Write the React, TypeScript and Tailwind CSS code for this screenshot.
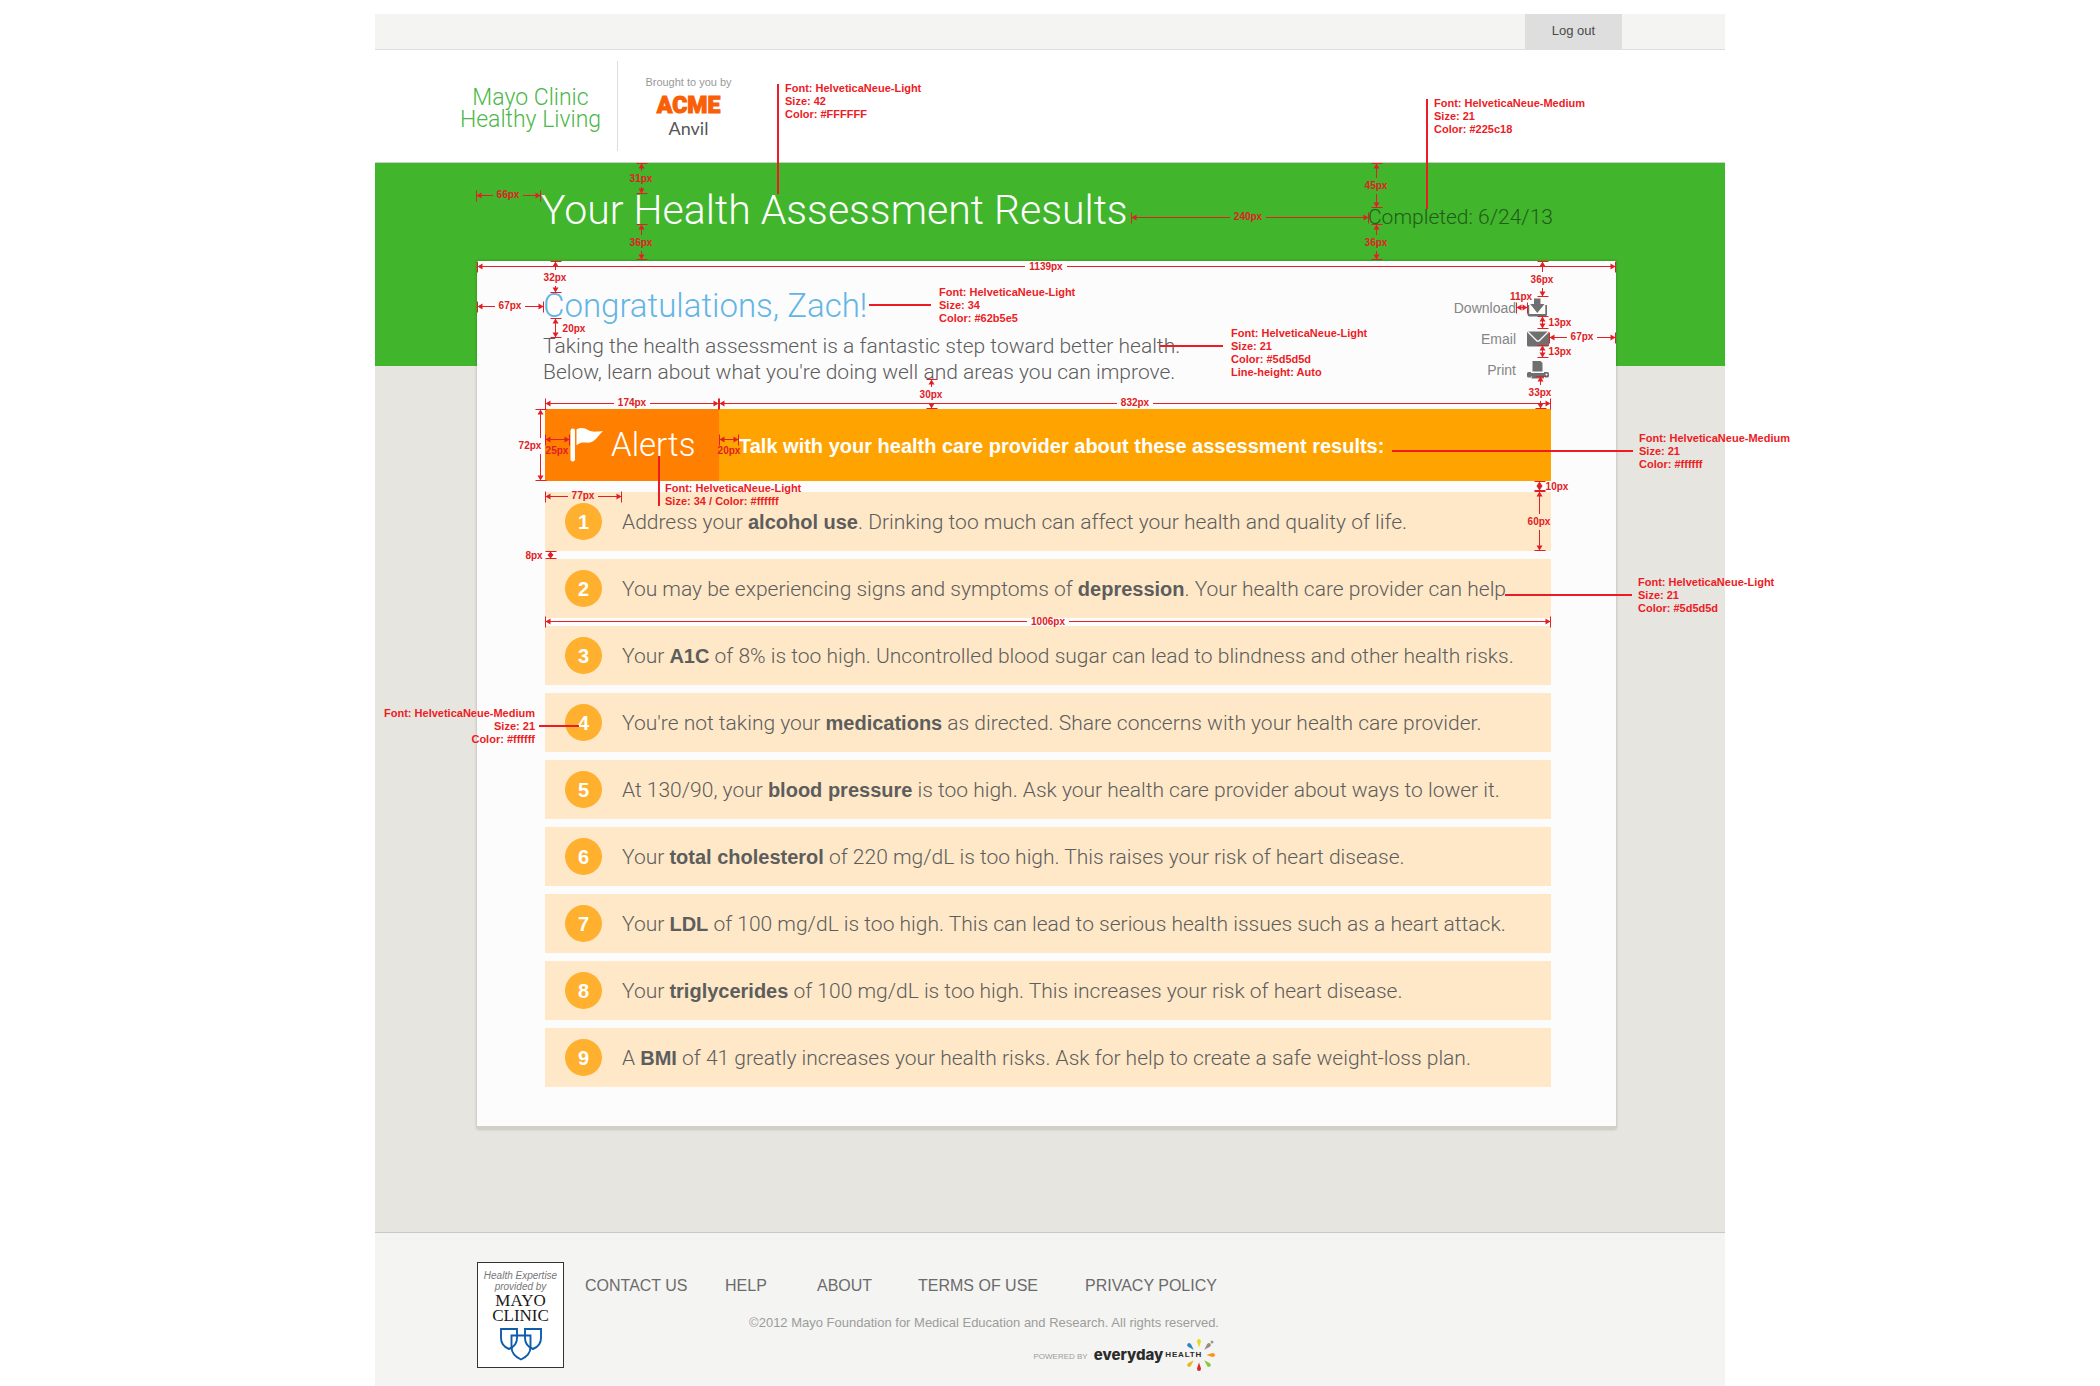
import React from "react";

const alerts: [string, string, string][] = [
  ["Address your ", "alcohol use", ". Drinking too much can affect your health and quality of life."],
  ["You may be experiencing signs and symptoms of ", "depression", ". Your health care provider can help."],
  ["Your ", "A1C", " of 8% is too high. Uncontrolled blood sugar can lead to blindness and other health risks."],
  ["You're not taking your ", "medications", " as directed. Share concerns with your health care provider."],
  ["At 130/90, your ", "blood pressure", " is too high. Ask your health care provider about ways to lower it."],
  ["Your ", "total cholesterol", " of 220 mg/dL is too high. This raises your risk of heart disease."],
  ["Your ", "LDL", " of 100 mg/dL is too high. This can lead to serious health issues such as a heart attack."],
  ["Your ", "triglycerides", " of 100 mg/dL is too high. This increases your risk of heart disease."],
  ["A ", "BMI", " of 41 greatly increases your health risks. Ask for help to create a safe weight-loss plan."],
];

/* Design annotations. Coordinates are measured from the top left corner of the page column. */

type Measure = {
  dir: "h" | "v";
  at: number;
  from: number;
  to: number;
  label: string;
  x: number;
  y: number;
  gap?: boolean;
};

const measures: Measure[] = [
  { dir: "v", at: 266, from: 163, to: 193, label: "31px", x: 266, y: 179, gap: true },
  { dir: "v", at: 266, from: 224, to: 259, label: "36px", x: 266, y: 243, gap: true },
  { dir: "h", at: 195, from: 101, to: 165, label: "66px", x: 133, y: 195, gap: true },
  { dir: "h", at: 266, from: 102, to: 1240, label: "1139px", x: 671, y: 267, gap: true },
  { dir: "v", at: 1001, from: 163, to: 207, label: "45px", x: 1001, y: 186, gap: true },
  { dir: "v", at: 1001, from: 224, to: 259, label: "36px", x: 1001, y: 243, gap: true },
  { dir: "h", at: 217, from: 756, to: 993, label: "240px", x: 873, y: 217, gap: true },
  { dir: "v", at: 180, from: 261, to: 292, label: "32px", x: 180, y: 278, gap: true },
  { dir: "v", at: 180, from: 318, to: 337, label: "20px", x: 199, y: 329 },
  { dir: "h", at: 306, from: 102, to: 168, label: "67px", x: 135, y: 306, gap: true },
  { dir: "h", at: 403, from: 170, to: 343, label: "174px", x: 257, y: 403, gap: true },
  { dir: "h", at: 403, from: 344, to: 1175, label: "832px", x: 760, y: 403, gap: true },
  { dir: "v", at: 556, from: 379, to: 408, label: "30px", x: 556, y: 395, gap: true },
  { dir: "v", at: 165, from: 409, to: 480, label: "72px", x: 155, y: 446, gap: true },
  { dir: "h", at: 439, from: 170, to: 194, label: "25px", x: 182, y: 451 },
  { dir: "h", at: 439, from: 344, to: 363, label: "20px", x: 354, y: 451 },
  { dir: "h", at: 496, from: 170, to: 246, label: "77px", x: 208, y: 496, gap: true },
  { dir: "v", at: 1167, from: 261, to: 296, label: "36px", x: 1167, y: 280, gap: true },
  { dir: "h", at: 307, from: 1141, to: 1152, label: "11px", x: 1146, y: 297 },
  { dir: "v", at: 1167, from: 316, to: 328, label: "13px", x: 1185, y: 323 },
  { dir: "v", at: 1167, from: 345, to: 357, label: "13px", x: 1185, y: 352 },
  { dir: "h", at: 337, from: 1174, to: 1240, label: "67px", x: 1207, y: 337, gap: true },
  { dir: "v", at: 1165, from: 376, to: 408, label: "33px", x: 1165, y: 393, gap: true },
  { dir: "v", at: 1164, from: 481, to: 490, label: "10px", x: 1182, y: 487 },
  { dir: "v", at: 1164, from: 491, to: 550, label: "60px", x: 1164, y: 522, gap: true },
  { dir: "v", at: 175, from: 551, to: 558, label: "8px", x: 159, y: 556 },
  { dir: "h", at: 621, from: 170, to: 1175, label: "1006px", x: 673, y: 622, gap: true },
];

const leaders: [number, number, number, number][] = [
  [403, 84, 403, 194],
  [1052, 99, 1052, 209],
  [494, 305, 556, 305],
  [785, 346, 848, 346],
  [1017, 451, 1258, 451],
  [284, 456, 284, 506],
  [1130, 595, 1257, 595],
  [164, 726, 204, 726],
];

const notes: { x: number; y: number; right?: boolean; lines: string[] }[] = [
  { x: 410, y: 82, lines: ["Font: HelveticaNeue-Light", "Size: 42", "Color: #FFFFFF"] },
  { x: 1059, y: 97, lines: ["Font: HelveticaNeue-Medium", "Size: 21", "Color: #225c18"] },
  { x: 564, y: 286, lines: ["Font: HelveticaNeue-Light", "Size: 34", "Color: #62b5e5"] },
  { x: 856, y: 327, lines: ["Font: HelveticaNeue-Light", "Size: 21", "Color: #5d5d5d", "Line-height: Auto"] },
  { x: 1264, y: 432, lines: ["Font: HelveticaNeue-Medium", "Size: 21", "Color: #ffffff"] },
  { x: 290, y: 482, lines: ["Font: HelveticaNeue-Light", "Size: 34 / Color: #ffffff"] },
  { x: 1263, y: 576, lines: ["Font: HelveticaNeue-Light", "Size: 21", "Color: #5d5d5d"] },
  { x: 160, y: 707, right: true, lines: ["Font: HelveticaNeue-Medium", "Size: 21", "Color: #ffffff"] },
];

function MeasureLine({ m }: { m: Measure }) {
  const along = m.dir === "h" ? m.x : m.y;
  const half = m.dir === "h" ? m.label.length * 3 + 3 : 8;
  const a = m.from + 0.5;
  const b = m.to + 0.5;
  const c = m.at + 0.5;
  const head = Math.min(5, (b - a) / 2);
  const d =
    `M${a} ${c - 5}V${c + 6}M${b} ${c - 5}V${c + 6}` +
    (m.gap ? `M${a} ${c}H${along - half}M${along + half} ${c}H${b}` : `M${a} ${c}H${b}`);
  const shape = (
    <>
      <path d={d} stroke="#e02025" fill="none" />
      <path d={`M${a} ${c}l${head} -3v6zM${b} ${c}l${-head} -3v6z`} fill="#e02025" />
    </>
  );
  return m.dir === "h" ? <g>{shape}</g> : <g transform="matrix(0 1 1 0 0 0)">{shape}</g>;
}

function Annotations() {
  return (
    <div className="pointer-events-none absolute inset-0 font-['Liberation_Sans',Arial,sans-serif] font-bold text-[#ed1c24]">
      <svg className="absolute left-0 top-0 overflow-visible" width="1350" height="800" aria-hidden="true">
        {measures.map((m, i) => (
          <MeasureLine key={i} m={m} />
        ))}
        {leaders.map(([x1, y1, x2, y2], i) => (
          <path key={i} d={`M${x1} ${y1}L${x2} ${y2}`} stroke="#ed1c24" strokeWidth="2" />
        ))}
      </svg>
      {measures.map((m, i) => (
        <span
          key={i}
          className="absolute -translate-x-1/2 -translate-y-1/2 text-[10px] leading-3 text-[#e02025]"
          style={{ left: m.x, top: m.y }}
        >
          {m.label}
        </span>
      ))}
      {notes.map((n, i) => (
        <div
          key={i}
          className={
            n.right
              ? "absolute -translate-x-full whitespace-nowrap text-right text-[11px] leading-[13px]"
              : "absolute whitespace-nowrap text-[11px] leading-[13px]"
          }
          style={{ left: n.x, top: n.y }}
        >
          {n.lines.map((l) => (
            <p key={l}>{l}</p>
          ))}
        </div>
      ))}
    </div>
  );
}

function DownloadIcon() {
  return (
    <svg width="22" height="20" viewBox="0 0 22 20" fill="#6f6f6f" aria-hidden="true">
      <path d="M7 0.500h6.500v5.500h4L10.300 15 3.200 6H7z" />
      <path d="M0.500 7v9.500a2 2 0 0 0 2 2h15.500a2 2 0 0 0 2-2V7h-1.700v9H2.200V7z" />
    </svg>
  );
}

function EmailIcon() {
  return (
    <svg width="22" height="16" viewBox="0 0 22 16" aria-hidden="true">
      <rect x="0" y="0.500" width="22" height="15" rx="1.500" fill="#6f6f6f" />
      <path d="M1 1l8.500 8.500a2 2 0 0 0 3 0L21 1" stroke="#fcfcfc" strokeWidth="1.300" fill="none" />
    </svg>
  );
}

function PrintIcon() {
  return (
    <svg width="22" height="18" viewBox="0 0 22 18" fill="#6f6f6f" aria-hidden="true">
      <path d="M5.500 0h8l2 2v8.500H5.500z" />
      <path d="M0 12.500Q0 11 1.500 11H4v1h13v-1h3.500Q22 11 22 12.500v2.500Q22 16.500 20.500 16.500H18V15H4v1.500H1.500Q0 16.500 0 15z" />
      <path d="M4.500 14h12.500v3.500H4.500z" />
      <circle cx="19.500" cy="13.500" r="1" fill="#fcfcfc" />
    </svg>
  );
}

function FlagIcon() {
  return (
    <svg width="34" height="34" viewBox="0 0 34 34" fill="#fff" aria-hidden="true">
      <rect x="0.500" y="0.500" width="4.500" height="33" rx="2.200" />
      <path d="M6.500 1.500C11-1 15 0 18 2c4 2.500 8 1.500 15 1.300-4 3-7 9.500-12 11-5 1.300-9-2-14.500 3z" />
    </svg>
  );
}

function Shields() {
  return (
    <svg className="mt-1" width="44" height="34" viewBox="0 0 44 34" fill="none" stroke="#0f5cab" strokeWidth="1.900" aria-hidden="true">
      <path d="M2 2h16v9c0 5-3 9-8 11-5-2-8-6-8-11z" />
      <path d="M26 2h16v9c0 5-3 9-8 11-5-2-8-6-8-11z" />
      <path d="M12.500 8.500h19V20c0 5.500-4 10-9.500 12.500C16.500 30 12.500 25.500 12.500 20z" />
    </svg>
  );
}

const rays: [number, string][] = [
  [0, "#e3dc1e"],
  [45, "#9b8b80"],
  [90, "#f7941d"],
  [135, "#8dc63f"],
  [180, "#d9272e"],
  [225, "#e8b91a"],
  [315, "#2a86c8"],
];

function Burst() {
  return (
    <svg className="absolute -right-3.5 top-1/2 -translate-y-1/2" width="34" height="34" viewBox="-17 -17 34 34" aria-hidden="true">
      {rays.map(([angle, color]) => (
        <path key={angle} d="M0 -7.500L-2 -13.500Q-2 -16 0 -16T2 -13.500z" fill={color} transform={`rotate(${angle})`} />
      ))}
      <circle cx="13" cy="-13" r="1.500" fill="#9b9b9b" />
    </svg>
  );
}

const actions = [
  { label: "Download", icon: <DownloadIcon /> },
  { label: "Email", icon: <EmailIcon /> },
  { label: "Print", icon: <PrintIcon /> },
];

export default function App() {
  return (
    <div className="bg-white font-['Roboto','Liberation_Sans',sans-serif] text-[#5d5d5d]">
      <div className="relative mx-auto max-w-[1350px] pt-3.5">
        <div className="flex h-9 justify-end border-b border-[#dedfd8] bg-[#f4f4f2] pr-[103px]">
          <button className="h-full w-[97px] bg-[#dedede] pb-0.5 font-['Liberation_Sans',sans-serif] text-[13px] text-[#4a4a4a]">
            Log out
          </button>
        </div>

        <header className="flex h-[113px] items-center border-b border-[#c9cfc6] bg-white pl-[77px]">
          <a href="#home" className="w-[165px] pr-2 pt-1.5 text-center text-[23px] font-light leading-[22px] text-[#4cb748]">
            Mayo Clinic
            <br />
            Healthy Living
          </a>
          <div className="flex h-[90px] w-[142px] flex-col items-center justify-center border-l border-[#dcdcdc]">
            <p className="font-['Liberation_Sans',sans-serif] text-[11px] leading-4 text-[#999]">Brought to you by</p>
            <p className="mt-1 text-[23px] font-black leading-6 text-[#f95f06] [-webkit-text-stroke:1px_#f95f06]">
              ACME
            </p>
            <p className="font-['Lato',sans-serif] text-[18px] leading-5 text-[#555]">Anvil</p>
          </div>
        </header>

        <main className="bg-[linear-gradient(#41b52c_203px,#e6e5df_203px)] pb-[103px] pl-[102px] pr-[109px]">
          <div className="flex h-[98px] items-baseline justify-between pl-16 pr-[63px] pt-[22px]">
            <h1 className="text-[41px] font-light leading-[50px] text-white">Your Health Assessment Results</h1>
            <p className="text-[21px] font-light text-[#225c18]">Completed: 6/24/13</p>
          </div>

          <section className="border-b-[3px] border-[#d0d0c6] bg-[#fcfcfc] pb-[39px] pl-[68px] pr-[65px] shadow-[0_0_3px_rgba(0,0,0,0.25)]">
            <div className="flex h-[148px] justify-between">
              <div className="-ml-0.5 pt-[25px]">
                <h2 className="text-[33px] font-light leading-10 text-[#62b5e5]">Congratulations, Zach!</h2>
                <p className="mt-[7px] text-[21px] font-light leading-[26px]">
                  Taking the health assessment is a fantastic step toward better health.
                  <br />
                  Below, learn about what you're doing well and areas you can improve.
                </p>
              </div>
              <ul className="flex flex-col gap-[11px] pr-0.5 pt-[37px]">
                {actions.map((a) => (
                  <li key={a.label}>
                    <a
                      href="#report"
                      className="flex h-5 items-center justify-end gap-[11px] font-['Liberation_Sans',sans-serif] text-[14px] text-[#858585]"
                    >
                      {a.label}
                      {a.icon}
                    </a>
                  </li>
                ))}
              </ul>
            </div>

            <div className="flex h-[72px] bg-[#ffa300] text-white">
              <div className="flex w-[174px] items-center gap-[7px] bg-[#ff8000] pl-[25px]">
                <FlagIcon />
                <h3 className="text-[33px] font-light leading-10">Alerts</h3>
              </div>
              <p className="flex items-center pl-5 pt-0.5 font-['Liberation_Sans',sans-serif] text-[20px] font-bold">
                Talk with your health care provider about these assessment results:
              </p>
            </div>

            <ol className="mt-[11px] flex flex-col gap-2">
              {alerts.map(([before, strong, after], i) => (
                <li key={strong} className="flex h-[59px] items-center bg-[#fee8c7] pl-5">
                  <span className="flex size-[37px] items-center justify-center rounded-full bg-[#ffb02e] font-['Liberation_Sans',sans-serif] text-[20px] font-bold text-white">
                    {i + 1}
                  </span>
                  <p className="pl-5 pt-0.5 text-[21px] font-light">
                    {before}
                    <b className="font-['Liberation_Sans',sans-serif] text-[20px] font-bold">{strong}</b>
                    {after}
                  </p>
                </li>
              ))}
            </ol>
          </section>
        </main>

        <footer className="flex h-[154px] border-t border-[#c8c8c5] bg-[#f4f4f2] pl-[102px] pt-[29px] font-['Liberation_Sans',sans-serif]">
          <div className="flex h-[106px] w-[87px] flex-col items-center border border-[#333] bg-white pt-[7px]">
            <p className="text-center text-[10px] italic leading-[11px] text-[#777]">
              Health Expertise
              <br />
              provided by
            </p>
            <p className="mt-px text-center font-['Liberation_Serif',serif] text-[17px] leading-[15px] text-[#1a1a1a]">
              MAYO
              <br />
              CLINIC
            </p>
            <Shields />
          </div>
          <div className="ml-[21px] flex w-[634px] flex-col items-end">
            <nav className="grid w-full grid-cols-[140px_92px_101px_167px_auto] pt-3 text-[16px] leading-6 text-[#6b6b6b]">
              <a href="#contact">CONTACT US</a>
              <a href="#help">HELP</a>
              <a href="#about">ABOUT</a>
              <a href="#terms">TERMS OF USE</a>
              <a href="#privacy">PRIVACY POLICY</a>
            </nav>
            <p className="mt-[15px] text-[13px] leading-5 text-[#9c9c9c]">
              ©2012 Mayo Foundation for Medical Education and Research. All rights reserved.
            </p>
            <div className="mt-2.5 flex h-6 items-center pr-[17px]">
              <span className="pr-1.5 pt-1 text-[8px] text-[#9c9c9c]">POWERED BY</span>
              <span className="font-['Inter',sans-serif] text-[15px] font-extrabold text-[#2b2b2b]">everyday</span>
              <span className="relative pl-0.5 text-[8px] font-bold tracking-widest text-[#2b2b2b]">
                HEALTH
                <Burst />
              </span>
            </div>
          </div>
        </footer>

        <Annotations />
      </div>
    </div>
  );
}
